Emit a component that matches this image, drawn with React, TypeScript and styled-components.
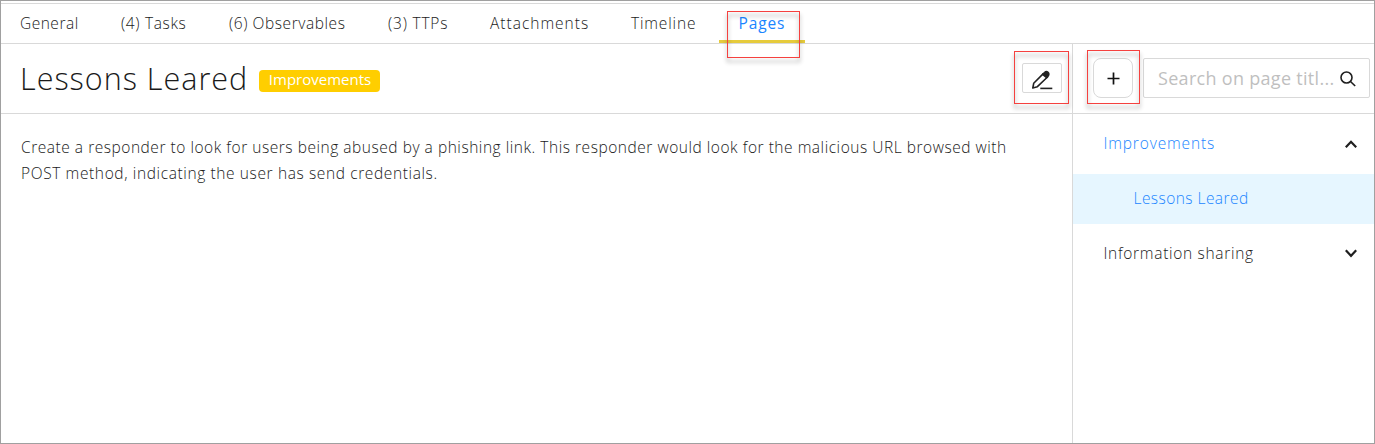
import React from 'react';
import styled, { createGlobalStyle } from 'styled-components';

const GlobalStyle = createGlobalStyle`
  * { box-sizing: border-box; }
  body {
    margin: 0;
    background: #fff;
    color: #1a1a1a;
    font-family: 'Open Sans', 'Liberation Sans', sans-serif;
    font-size: 15.5px;
    font-weight: 300;
  }
`;

const Frame = styled.div`
  display: flex;
  flex-direction: column;
  width: 1375px;
  height: 444px;
  padding-top: 2px;
  border: 1px solid #a0a0a0;
`;

const Text = styled.span<{ $spacing: number }>`
  letter-spacing: ${(p) => p.$spacing}px;
  white-space: nowrap;
`;

const TabBar = styled.nav`
  display: flex;
  height: 41px;
  flex: none;
  border-top: 1px solid #d9d9d9;
  border-bottom: 1px solid #d9d9d9;
`;

const Tab = styled.a<{ $width: number; $active?: boolean }>`
  position: relative;
  display: flex;
  align-items: center;
  width: ${(p) => p.$width}px;
  padding: 0 0 2px ${(p) => (p.$active ? 19.5 : 19)}px;
  color: ${(p) => (p.$active ? '#1a85ff' : 'inherit')};
  font-weight: ${(p) => (p.$active ? 400 : 300)};
  box-shadow: ${(p) => (p.$active ? 'inset 0 -3px #e6cb3c' : 'none')};
`;

const Callout = styled.span<{ $x: number; $y: number; $w: number; $h: number }>`
  position: absolute;
  left: ${(p) => p.$x}px;
  top: ${(p) => p.$y}px;
  width: ${(p) => p.$w}px;
  height: ${(p) => p.$h}px;
  border: 1px solid #f5413f;
  filter: drop-shadow(0 4px 2px rgba(0, 0, 0, 0.42));
  pointer-events: none;
`;

const Main = styled.div`
  display: flex;
  flex: 1;
`;

const Article = styled.section`
  width: 1072px;
  border-right: 1px solid #d9d9d9;
`;

const Header = styled.header`
  display: flex;
  align-items: center;
  height: 70px;
  padding: 0 10px 1px 19px;
  border-bottom: 1px solid #d9d9d9;
`;

const Title = styled.h1`
  width: 239px;
  margin: 0;
  font-size: 30.5px;
  line-height: 40px;
  font-weight: 300;
`;

const Badge = styled.span`
  display: flex;
  align-items: center;
  justify-content: center;
  width: 121px;
  height: 22px;
  margin-top: 6px;
  padding: 0 0 4px 1px;
  border-radius: 4px;
  background: #ffce00;
  color: #fff;
  font-size: 15px;
  font-weight: 400;
`;

const ButtonSlot = styled.div<{ $push?: boolean }>`
  position: relative;
  display: flex;
  flex: none;
  margin-left: ${(p) => (p.$push ? 'auto' : '0')};
`;

const IconButton = styled.button<{ $height: number; $radius: number }>`
  display: flex;
  align-items: center;
  justify-content: center;
  width: 40px;
  height: ${(p) => p.$height}px;
  padding: 0;
  border: 1px solid #d9d9d9;
  border-radius: ${(p) => p.$radius}px;
  background: #fff;
  color: #1f1f1f;
`;

const Body = styled.p`
  margin: 20px;
  line-height: 26px;
`;

const Sidebar = styled.aside`
  flex: 1;
`;

const SidebarHeader = styled.div`
  display: flex;
  align-items: center;
  gap: 10px;
  height: 70px;
  padding: 0 4px 1px 20px;
  border-bottom: 1px solid #d9d9d9;
`;

const Search = styled.div`
  display: flex;
  flex: 1;
  align-items: center;
  justify-content: space-between;
  height: 40px;
  padding: 0 13px 0 14px;
  border: 1px solid #d9d9d9;
  border-radius: 2px;
  color: #bfbfbf;
  font-size: 18px;
  font-weight: 400;
  svg { margin-top: 1px; }
`;

const Category = styled.div<{ $open?: boolean }>`
  display: flex;
  align-items: center;
  justify-content: space-between;
  height: 60px;
  padding: 0 17px 2px 30.5px;
  color: ${(p) => (p.$open ? '#1a85ff' : 'inherit')};
  svg { margin-top: 2px; }
`;

const PageItem = styled.div`
  display: flex;
  align-items: center;
  height: 50px;
  padding: 0 0 2px 60.5px;
  background: #e6f6ff;
  color: #1a85ff;
`;

const Chevron = ({ up }: { up?: boolean }) => (
  <svg width="12" height="10" viewBox="0 0 12 10" fill="none" stroke="#1f1f1f" strokeWidth="2.2">
    <path d={up ? 'M.8 8.3 6 2.8l5.2 5.5' : 'M.8 1.3 6 6.8l5.2-5.5'} />
  </svg>
);

const tabs = [
  { label: 'General', width: 101, spacing: 0.5 },
  { label: '(4) Tasks', width: 108, spacing: 0.65 },
  { label: '(6) Observables', width: 159, spacing: 0.57 },
  { label: '(3) TTPs', width: 102, spacing: 0.8 },
  { label: 'Attachments', width: 141, spacing: 1 },
  { label: 'Timeline', width: 107, spacing: 0.85 },
];

export default function App() {
  return (
    <>
      <GlobalStyle />
      <Frame>
        <TabBar>
          {tabs.map((t) => (
            <Tab key={t.label} $width={t.width}>
              <Text $spacing={t.spacing}>{t.label}</Text>
            </Tab>
          ))}
          <Tab $width={86} $active>
            <Text $spacing={0.85}>Pages</Text>
            <Callout $x={8} $y={7} $w={73} $h={47} />
          </Tab>
        </TabBar>
        <Main>
          <Article>
            <Header>
              <Title><Text $spacing={1}>Lessons Leared</Text></Title>
              <Badge><Text $spacing={0}>Improvements</Text></Badge>
              <ButtonSlot $push>
                <Callout $x={-8} $y={-12} $w={55} $h={53} />
                <IconButton $height={30} $radius={2} aria-label="Edit page">
                  <svg width="22" height="24" viewBox="0 0 22 24" fill="none" stroke="#222" strokeWidth="1.6" strokeLinejoin="round">
                    <path d="m1.8 22 .9-4.7L12.3 7.6l4.2 3.4L6.4 20.7Z" />
                    <path d="m11.7 8.3 1.9-1.7a2.4 2.4 0 0 1 3.6 3.3l-1.6 1.7Z" fill="#222" />
                    <path d="M9.3 22.4h12" />
                  </svg>
                </IconButton>
              </ButtonSlot>
            </Header>
            <Body>
              <Text $spacing={0.535}>
                Create a responder to look for users being abused by a phishing link. This responder would look for the malicious URL browsed with
              </Text>
              <br />
              <Text $spacing={0.62}>POST method, indicating the user has send credentials.</Text>
            </Body>
          </Article>
          <Sidebar>
            <SidebarHeader>
              <ButtonSlot>
                <Callout $x={-6} $y={-8} $w={53} $h={54} />
                <IconButton $height={40} $radius={8} aria-label="Add page">
                  <svg width="14" height="14" viewBox="0 0 14 14" fill="none" stroke="#111" strokeWidth="1.7">
                    <path d="M7.5 1.5v12M1.5 7.5h12" />
                  </svg>
                </IconButton>
              </ButtonSlot>
              <Search>
                <Text $spacing={0.3}>Search on page titl...</Text>
                <svg width="16" height="16" viewBox="0 0 16 16" fill="none" stroke="#1f1f1f" strokeWidth="1.6">
                  <circle cx="6.5" cy="6.5" r="5.5" />
                  <path d="m10.5 10.5 4.7 4.5" />
                </svg>
              </Search>
            </SidebarHeader>
            <Category $open>
              <Text $spacing={0.85}>Improvements</Text>
              <Chevron up />
            </Category>
            <PageItem><Text $spacing={0.45}>Lessons Leared</Text></PageItem>
            <Category>
              <Text $spacing={0.7}>Information sharing</Text>
              <Chevron />
            </Category>
          </Sidebar>
        </Main>
      </Frame>
    </>
  );
}
